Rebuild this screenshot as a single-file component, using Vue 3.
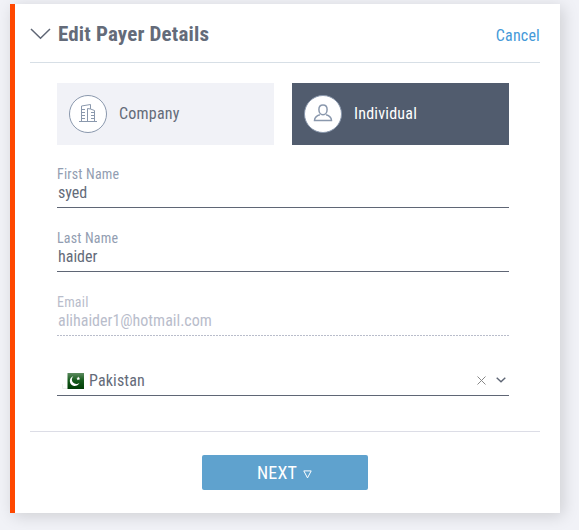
<script setup>
const fields = [
  { label: 'First Name', value: 'syed', disabled: false },
  { label: 'Last Name', value: 'haider', disabled: false },
  { label: 'Email', value: 'alihaider1@hotmail.com', disabled: true },
]
</script>

<template>
  <main class="page">
    <section class="card">
      <header class="head">
        <svg class="toggle" width="21" height="12" viewBox="0 0 21 12"><path d="M1 1l9.500 9.300L20 1" /></svg>
        <h1>Edit Payer Details</h1>
        <a class="cancel">Cancel</a>
      </header>

      <div class="body">
        <div class="types">
          <div class="type">
            <i class="circle">
              <svg width="20" height="20" viewBox="0 0 20 20">
                <path d="M1 17.500h18M3.500 17V2l9-1.500V5M9.500 17V4.500L12.500 5l4 1.500V17" />
                <path d="M4 5.500h3M4 8.500h3M4 11.500h3M4 14.500h3M13 8.500h3M13 11.500h3M13 14.500h3" />
              </svg>
            </i>
            <span>Company</span>
          </div>
          <div class="type active">
            <i class="circle">
              <svg class="person" width="20" height="20" viewBox="0 0 20 20">
                <path d="M10 1C7.300 1 5.900 2.900 5.900 5.500s1.500 5.300 4.100 5.300 4.100-2.700 4.100-5.300S12.700 1 10 1z" />
                <path d="M6.900 10.800C3.500 11.800 1.600 13.500 1.500 16.500h17c-.1-3-2-4.700-5.400-5.700" />
              </svg>
            </i>
            <span>Individual</span>
          </div>
        </div>

        <div v-for="f in fields" :key="f.label" class="field" :class="{ disabled: f.disabled }">
          <label>{{ f.label }}</label>
          <div class="value">{{ f.value }}</div>
        </div>

        <div class="select">
          <svg class="flag" width="22" height="18" viewBox="0 0 22 18">
            <defs>
              <linearGradient id="green" x1="0" y1="0" x2="0" y2="1">
                <stop offset="0" stop-color="#5d8b60" />
                <stop offset=".45" stop-color="#165b1c" />
                <stop offset="1" stop-color="#003d05" />
              </linearGradient>
            </defs>
            <path d="M.5 12v4.500H6" fill="none" stroke="#eeeeee" />
            <rect x="5.500" y="1" width="16.500" height="16" fill="url(#green)" />
            <path d="M11.300 4.200a5 5 0 1 0 6.200 6.600 4.200 4.200 0 1 1-6.200-6.600z" fill="#fff" />
            <path d="M16.300 4.500l.6 1.300 1.300.1-1 .9.300 1.400-1.200-.7-1.200.7.300-1.400-1-.9 1.300-.1z" fill="#fff" />
          </svg>
          <span class="country">Pakistan</span>
          <svg class="clear" width="9" height="9" viewBox="0 0 9 9"><path d="M.5.5l8 8M8.500.5l-8 8" /></svg>
          <svg class="arrow" width="10" height="6" viewBox="0 0 10 6"><path d="M.7.7L5 4.800 9.300.7" /></svg>
        </div>
      </div>

      <footer class="foot">
        <button type="button">
          <span>NEXT</span>
          <svg width="9" height="9" viewBox="0 0 9 9"><path d="M.8.900h7.400L4.500 7.900z" /></svg>
        </button>
      </footer>
    </section>
  </main>
</template>

<style>
body {
  background: #f1f2f7;
}
</style>

<style scoped>
* {
  box-sizing: border-box;
}
.page {
  height: 530px;
  padding: 4px 19px 17px 10px;
  overflow: hidden;
  background: #f1f2f7;
  color: #646b79;
  font: 16px/20px "Roboto Condensed", Roboto, sans-serif;
  font-stretch: 75%;
}
.card {
  height: 509px;
  padding: 0 20px 0 15px;
  border-left: 5px solid #ff4800;
  background: #fff;
  box-shadow: 3px 3px 15px rgba(0, 0, 0, 0.15);
}
.head {
  display: flex;
  height: 59px;
  border-bottom: 1px solid #d7dfe6;
}
svg {
  display: block;
  flex: none;
  fill: none;
}
.toggle {
  margin: 24px 7px 0 0;
  stroke: #5f6675;
  stroke-width: 1.5;
}
h1 {
  margin: 18px 0 0;
  font-size: 21px;
  line-height: 24px;
  font-weight: 700;
  letter-spacing: 0.17px;
}
.cancel {
  margin: 22px 0 0 auto;
  color: #4599d8;
  letter-spacing: 0.2px;
}
.body {
  padding: 20px 31px 0 27px;
}
.types {
  display: flex;
  gap: 18px;
  margin-bottom: 20px;
}
.type {
  display: flex;
  align-items: center;
  gap: 12px;
  width: 217px;
  height: 62px;
  padding-left: 12px;
  background: #f1f2f7;
  letter-spacing: 0.22px;
}
.type.active {
  background: #515c6e;
  color: #fff;
}
.circle {
  display: grid;
  place-items: center;
  width: 38px;
  height: 38px;
  border: 1px solid #8a98ad;
  border-radius: 50%;
  background: #fff;
}
.circle svg {
  stroke: #8a98ad;
}
.circle .person {
  stroke-width: 1.5;
}
.field {
  height: 43px;
  margin-bottom: 21px;
  border-bottom: 1px solid #5f6675;
}
.field label {
  display: block;
  color: #929db1;
  font-size: 14px;
  line-height: 18px;
  letter-spacing: 0.18px;
}
.value {
  padding-left: 1px;
}
.field.disabled {
  border-bottom: 0;
  background: repeating-linear-gradient(90deg, #b9bdcb 0 2px, transparent 2px 3px) bottom / 100% 1px no-repeat;
}
.disabled label,
.disabled .value {
  color: #b9bdcb;
}
.select {
  display: flex;
  align-items: center;
  height: 39px;
  padding: 9px 3px 0 5px;
  border-bottom: 1px solid #5f6675;
}
.flag {
  margin-right: 5px;
}
.country {
  letter-spacing: 0.15px;
}
.clear {
  margin-left: auto;
  stroke: #888;
}
.arrow {
  margin: -2px 0 0 10px;
  stroke: #5f6675;
  stroke-width: 1.4;
}
.foot {
  display: flex;
  justify-content: center;
  margin-top: 35px;
  padding-top: 23px;
  border-top: 1px solid #dcdde6;
}
button {
  display: flex;
  align-items: center;
  justify-content: center;
  gap: 6px;
  width: 166px;
  height: 35px;
  padding: 0 1px 0 0;
  border: 0;
  border-radius: 2px;
  background: #5fa2ce;
  color: #fff;
  font: inherit;
  font-size: 18px;
  letter-spacing: 0.2px;
}
button svg {
  stroke: #fff;
  margin-top: 3px;
}
</style>
